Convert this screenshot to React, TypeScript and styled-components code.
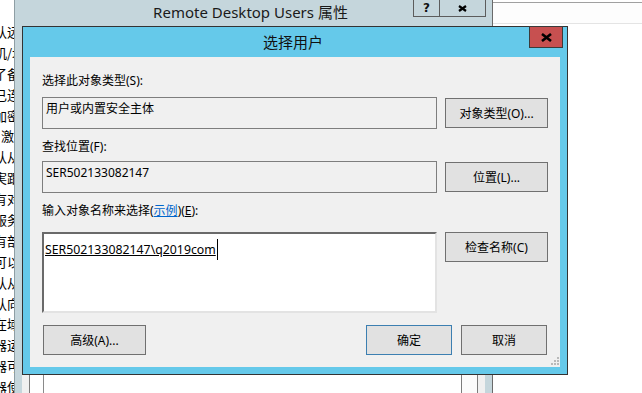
import React from "react";
import styled, { createGlobalStyle } from "styled-components";

const GlobalStyle = createGlobalStyle`
  html, body { margin: 0; padding: 0; background: #ffffff; }
  body { font-family: "Noto Sans", "Noto Sans CJK SC", sans-serif; }
  * { box-sizing: border-box; }
`;

const FONT = `"Noto Sans", "Noto Sans CJK SC", sans-serif`;

const Desktop = styled.div`
  position: relative;
  width: 642px;
  height: 393px;
  overflow: hidden;
  display: flex;
  background: #ffffff;
`;

/* ---------- window behind, at the far left ---------- */
const BackWindow = styled.div`
  width: 14px;
  flex: none;
  background: #ffffff;
  overflow: hidden;
  padding-top: 22px;
  display: flex;
  flex-direction: column;
`;

const BackRow = styled.div<{ $shift?: number }>`
  height: 20.9px;
  line-height: 20.9px;
  font-family: "Noto Sans CJK SC", sans-serif;
  font-size: 13px;
  color: #000;
  white-space: nowrap;
  margin-left: ${(p) => p.$shift ?? -6}px;
`;

/* ---------- parent dialog (inactive) ---------- */
const ParentWindow = styled.div`
  width: 479px;
  flex: none;
  background: #c5d6dc;
  border-left: 1px solid #8e9ea4;
  border-right: 1px solid #6a6a6a;
  display: flex;
  flex-direction: column;
`;

const ParentTitleBar = styled.div`
  height: 26px;
  display: grid;
  grid-template-columns: 1fr auto 1fr;
  align-items: start;
  padding-right: 6px;
`;

const ParentTitle = styled.div`
  grid-column: 2;
  font-family: ${FONT};
  font-size: 15px;
  line-height: 24px;
  color: #1a1a1a;
  white-space: nowrap;
`;

const CaptionButtons = styled.div`
  grid-column: 3;
  justify-self: end;
  display: flex;
`;

const CaptionButton = styled.div<{ $w: number }>`
  width: ${(p) => p.$w}px;
  height: 17px;
  border: 1px solid #5c5c5c;
  border-top: none;
  & + & { border-left: none; }
  display: flex;
  align-items: center;
  justify-content: center;
  font-family: "DejaVu Sans", sans-serif;
  font-weight: bold;
  font-size: 12px;
  color: #111;
`;

const ParentBody = styled.div`
  flex: 1;
  margin: 0 7px;
  background: #f0f0f0;
  display: flex;
  flex-direction: column;
  justify-content: flex-end;
`;

const ListBox = styled.div`
  margin: 0 7px;
  height: 120px;
  background: #ffffff;
  border: 1px solid #7c7c7c;
  border-bottom: none;
  display: grid;
  grid-template-columns: 14px 1fr 16px;
`;

const ListCell = styled.div<{ $line?: boolean }>`
  border-right: ${(p) => (p.$line ? "1px solid #8a8a8a" : "none")};
`;

const ScrollTrack = styled.div`
  border-left: 1px solid #7c7c7c;
  background: #fbfbfb;
`;

/* ---------- window at the right ---------- */
const RightWindow = styled.div`
  flex: 1;
  background: #ffffff;
  display: flex;
  flex-direction: column;
`;

const RightHeader = styled.div`
  margin-top: 2px;
  height: 22px;
  border-top: 1px solid #a0a0a0;
  border-bottom: 1px solid #e4e4e4;
  background: #fdfdfd;
`;

/* ---------- modal dialog ---------- */
const Dialog = styled.div`
  position: absolute;
  left: 22px;
  top: 26px;
  width: 546px;
  height: 349px;
  background: #65c9ea;
  border: 1px solid #333333;
  display: flex;
  flex-direction: column;
`;

const TitleBar = styled.div`
  height: 30px;
  flex: none;
  display: grid;
  grid-template-columns: 1fr auto 1fr;
  align-items: start;
  padding-right: 4px;
`;

const Title = styled.div`
  grid-column: 2;
  font-family: "Noto Sans CJK SC", sans-serif;
  font-size: 15px;
  line-height: 30px;
  color: #111;
`;

const CloseButton = styled.div`
  grid-column: 3;
  justify-self: end;
  margin-top: -1px;
  width: 34px;
  height: 22px;
  background: #c75050;
  border: 1px solid #3b3b3b;
  display: flex;
  align-items: center;
  justify-content: center;
`;

const Content = styled.div`
  position: relative;
  flex: 1;
  margin: 0 7px 7px 7px;
  background: #f0f0f0;
  padding: 14px 12px 0 12px;
  display: flex;
  flex-direction: column;
  font-family: ${FONT};
  font-size: 12px;
  color: #000;
`;

const Label = styled.div<{ $mt?: number; $mb: number }>`
  height: 20px;
  line-height: 20px;
  margin-top: ${(p) => p.$mt ?? 0}px;
  margin-bottom: ${(p) => p.$mb}px;
  white-space: nowrap;
`;

const Link = styled.span`
  color: #0066cc;
  text-decoration: underline;
`;

const Row = styled.div<{ $top?: boolean }>`
  display: flex;
  gap: 8px;
  align-items: ${(p) => (p.$top ? "flex-start" : "center")};
`;

const ReadField = styled.div`
  flex: 1;
  height: 32px;
  border: 1px solid #7e7e7e;
  background: #f0f0f0;
  padding: 3px 3px 0 3px;
  line-height: 16px;
  white-space: nowrap;
`;

const Button = styled.div<{ $w: number; $default?: boolean }>`
  width: ${(p) => p.$w}px;
  height: 30px;
  flex: none;
  background: #e1e1e1;
  border: 1px solid ${(p) => (p.$default ? "#3c7fb1" : "#707070")};
  display: flex;
  align-items: center;
  justify-content: center;
  white-space: nowrap;
`;

const NameBox = styled.div`
  flex: 1;
  height: 81px;
  background: #ffffff;
  border-style: solid;
  border-width: 2px 2px 2px 2px;
  border-color: #6a6a6a #e3e3e3 #e3e3e3 #6a6a6a;
  padding: 5px 1px 0 1px;
  line-height: 18px;
  white-space: nowrap;
  display: flex;
  align-items: center;
  align-self: flex-start;
  flex-wrap: nowrap;
  align-content: flex-start;
`;

const NameLine = styled.div`
  display: flex;
  align-items: center;
  align-self: flex-start;
`;

const Resolved = styled.span`
  text-decoration: underline;
  font-size: 12.3px;
`;

const Caret = styled.span`
  display: inline-block;
  width: 1px;
  height: 21px;
  background: #000;
  margin-left: 1px;
`;

const BottomRow = styled.div`
  margin-top: 12px;
  display: flex;
  justify-content: space-between;
  padding: 0 1px;
`;

const ButtonGroup = styled.div`
  display: flex;
  gap: 9px;
`;

const Grip = styled.svg`
  position: absolute;
  right: 1px;
  bottom: 2px;
`;

const backRows: { t: string; s?: number }[] = [
  { t: "认远" }, { t: "机/坊" }, { t: "了备" }, { t: "已连" }, { t: "加密" },
  { t: "激", s: 1 }, { t: "认从" }, { t: "実跟" }, { t: "有对" }, { t: "服务" },
  { t: "有部" }, { t: "可以" }, { t: "认从" }, { t: "认向" }, { t: "在域" },
  { t: "器运" }, { t: "器可" }, { t: "器使" },
];

const XGlyph: React.FC<{ w: number; h: number; sw: number }> = ({ w, h, sw }) => (
  <svg width={w} height={h} viewBox={`0 0 ${w} ${h}`}>
    <path d={`M1 1 L${w - 1} ${h - 1} M${w - 1} 1 L1 ${h - 1}`} stroke="#000" strokeWidth={sw} fill="none" />
  </svg>
);

export default function App() {
  return (
    <>
      <GlobalStyle />
      <Desktop>
        <BackWindow>
          {backRows.map((r, i) => (
            <BackRow key={i} $shift={r.s}>{r.t}</BackRow>
          ))}
        </BackWindow>

        <ParentWindow>
          <ParentTitleBar>
            <ParentTitle>Remote Desktop Users 属性</ParentTitle>
            <CaptionButtons>
              <CaptionButton $w={27}>?</CaptionButton>
              <CaptionButton $w={46}>
                <XGlyph w={9} h={7} sw={2.2} />
              </CaptionButton>
            </CaptionButtons>
          </ParentTitleBar>
          <ParentBody>
            <ListBox>
              <ListCell $line />
              <ListCell />
              <ScrollTrack />
            </ListBox>
          </ParentBody>
        </ParentWindow>

        <RightWindow>
          <RightHeader />
        </RightWindow>

        <Dialog>
          <TitleBar>
            <Title>选择用户</Title>
            <CloseButton>
              <XGlyph w={11} h={9} sw={2.6} />
            </CloseButton>
          </TitleBar>
          <Content>
            <Label $mb={6}>选择此对象类型(S):</Label>
            <Row>
              <ReadField>用户或内置安全主体</ReadField>
              <Button $w={103}>对象类型(O)...</Button>
            </Row>

            <Label $mt={8} $mb={4}>查找位置(F):</Label>
            <Row>
              <ReadField>SER502133082147</ReadField>
              <Button $w={103}>位置(L)...</Button>
            </Row>

            <Label $mt={8} $mb={11}>
              输入对象名称来选择(<Link>示例</Link>)(<u>E</u>):
            </Label>
            <Row $top>
              <NameBox>
                <NameLine>
                  <Resolved>SER502133082147\q2019com</Resolved>
                  <Caret />
                </NameLine>
              </NameBox>
              <Button $w={103}>检查名称(C)</Button>
            </Row>

            <BottomRow>
              <Button $w={103}>高级(A)...</Button>
              <ButtonGroup>
                <Button $w={86} $default>确定</Button>
                <Button $w={86}>取消</Button>
              </ButtonGroup>
            </BottomRow>

            <Grip width="8" height="8" viewBox="0 0 8 8">
              {[
                [6, 0], [6, 3], [3, 3], [6, 6], [3, 6], [0, 6],
              ].map(([x, y], i) => (
                <rect key={i} x={x} y={y} width="2" height="2" fill="#b9b9b9" />
              ))}
            </Grip>
          </Content>
        </Dialog>
      </Desktop>
    </>
  );
}
